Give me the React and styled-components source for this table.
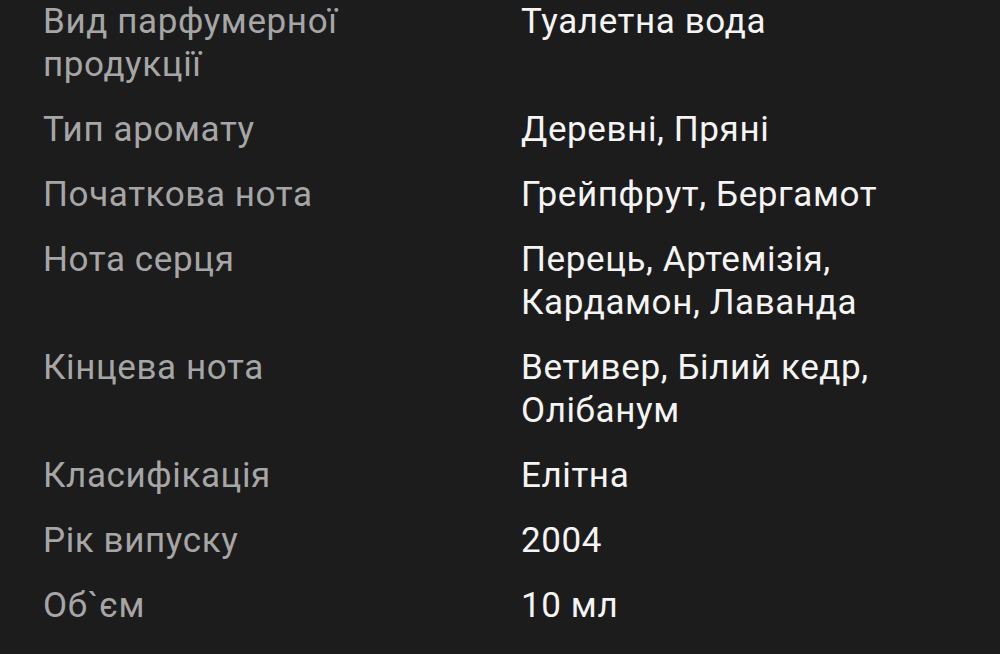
import React from "react";
import styled, { createGlobalStyle } from "styled-components";

const specs = [
  { label: "Вид парфумерної продукції", value: "Туалетна вода" },
  { label: "Тип аромату", value: "Деревні, Пряні" },
  { label: "Початкова нота", value: "Грейпфрут, Бергамот" },
  { label: "Нота серця", value: "Перець, Артемізія, Кардамон, Лаванда" },
  { label: "Кінцева нота", value: "Ветивер, Білий кедр, Олібанум" },
  { label: "Класифікація", value: "Елітна" },
  { label: "Рік випуску", value: "2004" },
  { label: "Об`єм", value: "10 мл" },
];

function App() {
  return (
    <>
      <GlobalStyle />
      <Wrapper>
        {specs.map((row) => (
          <Row key={row.label}>
            <Label>{row.label}</Label>
            <Value>{row.value}</Value>
          </Row>
        ))}
      </Wrapper>
    </>
  );
}

const GlobalStyle = createGlobalStyle`
  html, body {
    margin: 0;
    padding: 0;
    background: #1c1c1c;
  }
  body {
    font-family: Roboto, "Noto Sans", sans-serif;
  }
`;

const Wrapper = styled.div`
  width: 1000px;
  height: 654px;
  box-sizing: border-box;
  padding: 0 43px;
  background: #1c1c1c;
  overflow: hidden;
`;

const Row = styled.div`
  display: grid;
  grid-template-columns: 400px 1fr;
  column-gap: 78px;
  padding: 0 0 22px;
  font-size: 35px;
  line-height: 43px;
  letter-spacing: 0.6px;
`;

const Label = styled.div`
  color: #a6a6a6;
`;

const Value = styled.div`
  color: #f4f4f4;
`;

export default App;
